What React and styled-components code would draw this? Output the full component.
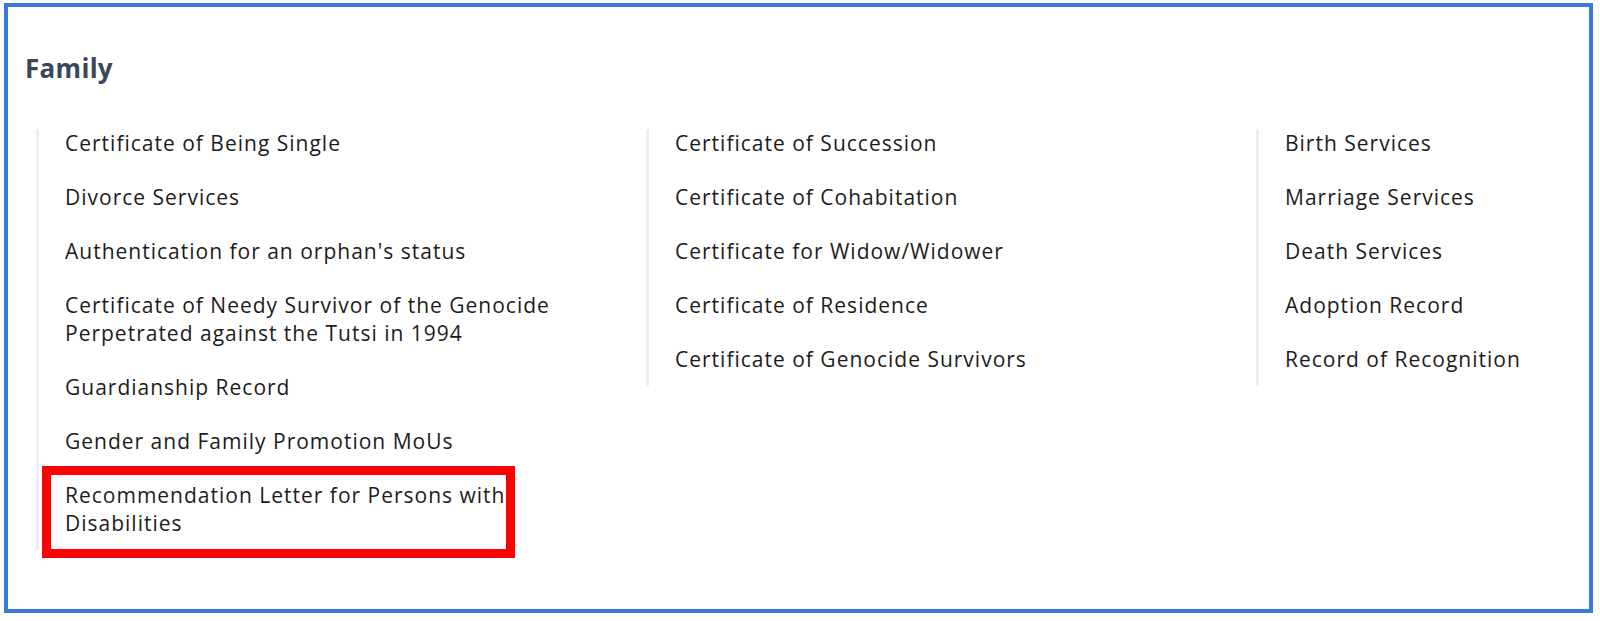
import React from "react";
import styled, { createGlobalStyle } from "styled-components";

const columns = [
  [
    "Certificate of Being Single",
    "Divorce Services",
    "Authentication for an orphan's status",
    "Certificate of Needy Survivor of the Genocide Perpetrated against the Tutsi in 1994",
    "Guardianship Record",
    "Gender and Family Promotion MoUs",
    { label: "Recommendation Letter for Persons with Disabilities", marked: true },
  ],
  [
    "Certificate of Succession",
    "Certificate of Cohabitation",
    "Certificate for Widow/Widower",
    "Certificate of Residence",
    "Certificate of Genocide Survivors",
  ],
  [
    "Birth Services",
    "Marriage Services",
    "Death Services",
    "Adoption Record",
    "Record of Recognition",
  ],
];

const App = () => {
  return (
    <>
      <GlobalStyle />
      <Frame>
        <Heading>Family</Heading>
        <Grid>
          {columns.map((items, i) => (
            <Column key={i}>
              {items.map((item) => {
                const label = typeof item === "string" ? item : item.label;
                const marked = typeof item !== "string" && item.marked;
                return (
                  <Item key={label} $marked={marked}>
                    {label}
                  </Item>
                );
              })}
            </Column>
          ))}
        </Grid>
      </Frame>
    </>
  );
};

export default App;

const GlobalStyle = createGlobalStyle`
  body {
    margin: 0;
    background: #ffffff;
    font-family: "Open Sans", Lato, sans-serif;
  }
`;

const Frame = styled.div`
  box-sizing: border-box;
  margin: 3px 0 0 4px;
  width: 1589px;
  height: 610px;
  border: 4px solid #3a78dc;
  padding: 0 0 0 17px;
  overflow: hidden;
`;

const Heading = styled.h2`
  margin: 0;
  padding-top: 44px;
  height: 78px;
  box-sizing: border-box;
  font-family: "Open Sans", sans-serif;
  font-weight: 700;
  font-size: 26px;
  line-height: 34px;
  color: #3a475b;
  letter-spacing: 0.3px;
`;

const Grid = styled.div`
  display: grid;
  grid-template-columns: 610px 610px 1fr;
  margin-top: 44px;
  margin-left: 11px;
  align-items: start;
`;

const Column = styled.ul`
  list-style: none;
  margin: 0;
  padding: 0 0 13px 26px;
  border-left: 3px solid #e9eef8;
  display: flex;
  flex-direction: column;
  gap: 26px;
`;

const Item = styled.li`
  position: relative;
  max-width: 520px;
  font-size: 21px;
  line-height: 28px;
  letter-spacing: 1px;
  color: #1c1c1c;

  &::after {
    content: "";
    display: ${(props) => (props.$marked ? "block" : "none")};
    position: absolute;
    left: -23px;
    top: -15px;
    width: 473px;
    height: 92px;
    box-sizing: border-box;
    border: 9px solid #ff0000;
  }
`;
